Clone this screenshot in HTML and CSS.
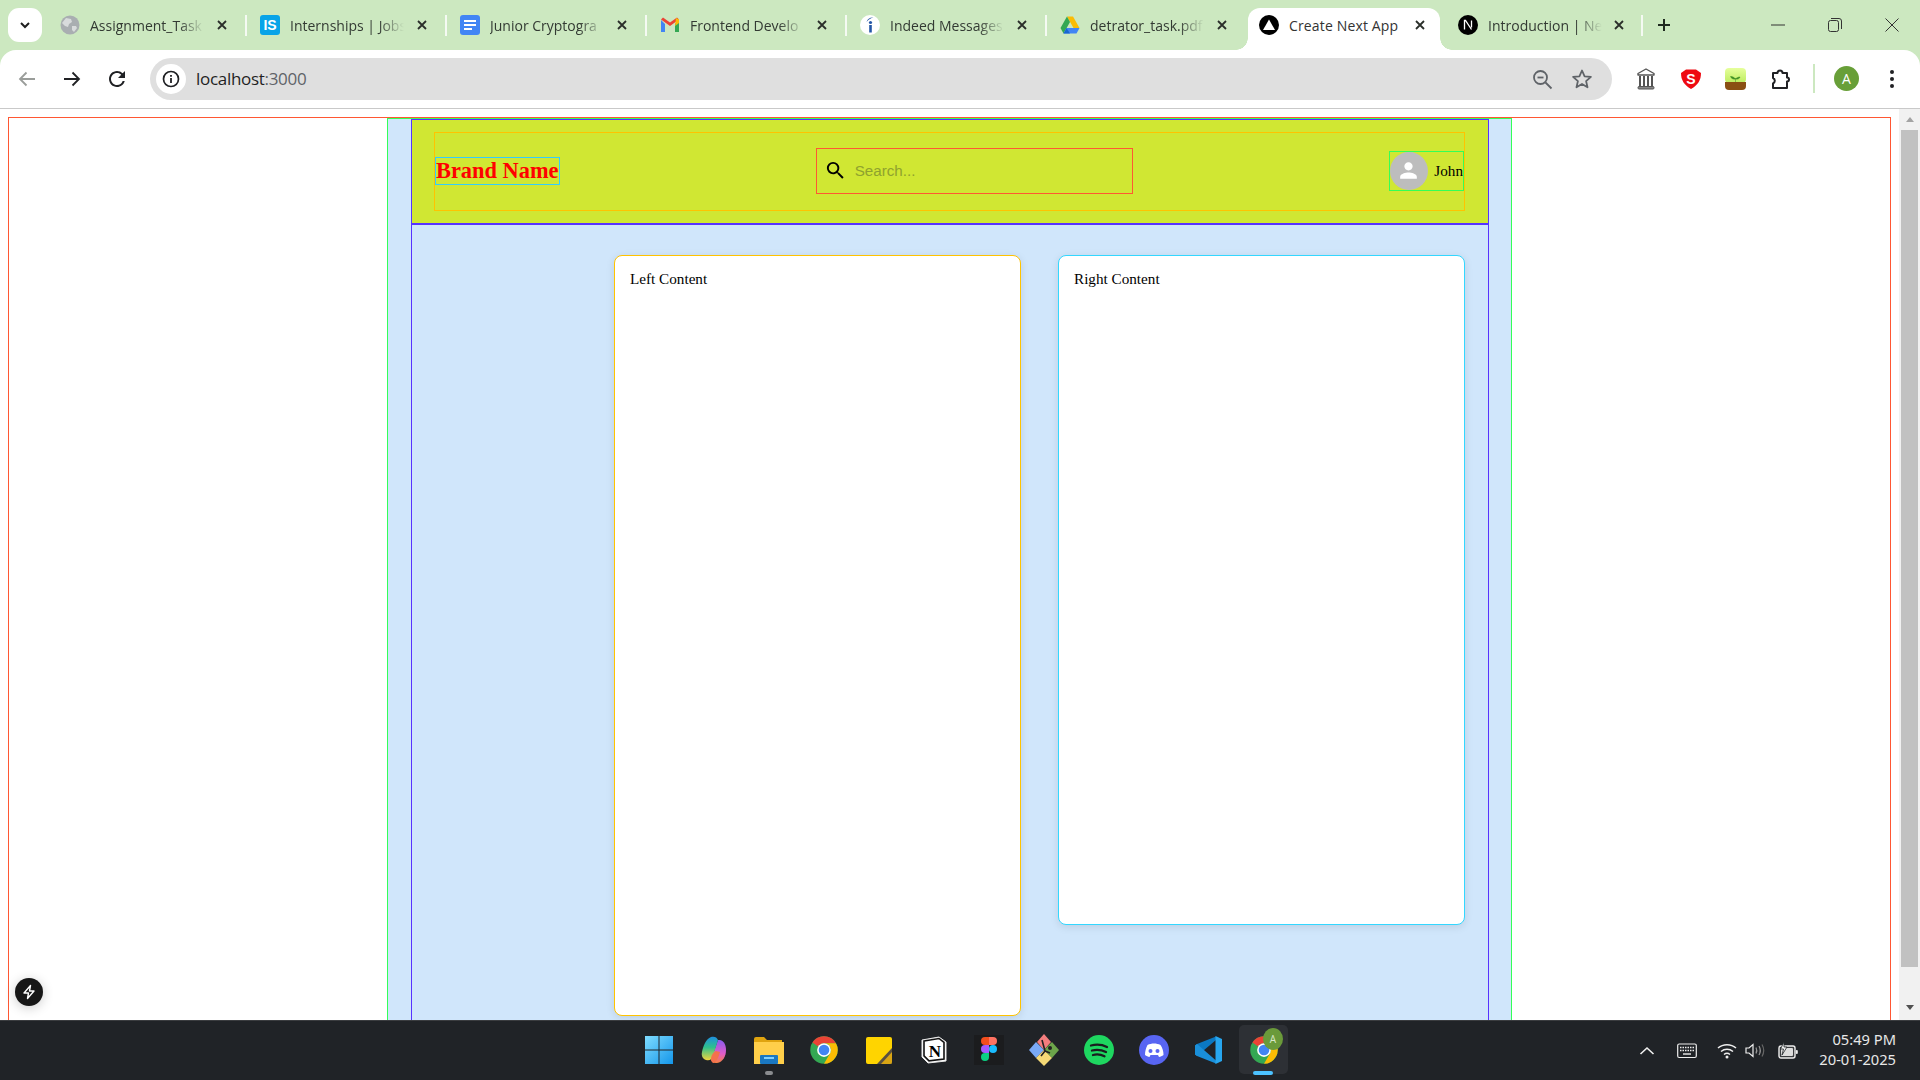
FILE: index.html
```html
<!DOCTYPE html>
<html lang="en">
<head>
<meta charset="utf-8">
<title>Create Next App</title>
<link rel="stylesheet" href="styles.css">
</head>
<body>
<svg class="defs" width="0" height="0" aria-hidden="true">
  <defs>
    <symbol id="x" viewBox="0 0 12 12"><path d="M2 2l8 8M10 2l-8 8" fill="none" stroke="#2a2f2a" stroke-width="1.8"/></symbol>
    <symbol id="chrome" viewBox="0 0 48 48">
      <circle cx="24" cy="24" r="22" fill="#34a853"/>
      <path d="M24 2A22 22 0 0 1 43.05 13H24A11 11 0 0 0 14.5 18.5L5.5 12A22 22 0 0 1 24 2Z" fill="#ea4335"/>
      <path d="M43.05 13A22 22 0 0 1 24 46L33.5 29.5A11 11 0 0 0 24 13Z" fill="#fbbc04"/>
      <circle cx="24" cy="24" r="11" fill="#fff"/>
      <circle cx="24" cy="24" r="8.5" fill="#4285f4"/>
    </symbol>
  </defs>
</svg>

<header class="tabstrip">
  <button class="tab-search"><svg width="14" height="14" viewBox="0 0 14 14"><path d="M3 5l4 4 4-4" fill="none" stroke="#1f1f1f" stroke-width="2"/></svg></button>
  <div class="tab">
    <svg class="fav" viewBox="0 0 20 20"><circle cx="10" cy="10" r="9.5" fill="#a9aeb1"/><path d="M6 3l5 1 1 3-3 2-1 3-3-1-3-3zM12 11l4 0 1 2-3 4-2-2z" fill="#d8dbdc"/></svg>
    <span class="tab-title">Assignment_Task</span>
    <svg class="tab-x"><use href="#x"/></svg>
  </div>
  <div class="tab">
    <svg class="fav" viewBox="0 0 20 20"><rect width="20" height="20" rx="3" fill="#08a4e8"/><text x="10" y="15" text-anchor="middle" class="fav-is">IS</text></svg>
    <span class="tab-title">Internships | Jobs</span>
    <svg class="tab-x"><use href="#x"/></svg>
  </div>
  <div class="tab">
    <svg class="fav" viewBox="0 0 20 20"><rect width="20" height="20" rx="3" fill="#4285f4"/><path d="M4 5h12v2H4zM4 9h12v2H4zM4 13h8v2H4z" fill="#fff"/></svg>
    <span class="tab-title">Junior Cryptogra</span>
    <svg class="tab-x"><use href="#x"/></svg>
  </div>
  <div class="tab">
    <svg class="fav" viewBox="0 0 20 20"><path d="M1 5v12h4V9z" fill="#4285f4"/><path d="M19 5v12h-4V9z" fill="#34a853"/><path d="M1 4.500L10 11l9-6.500-2-2-7 5-7-5z" fill="#ea4335"/><path d="M16 3l3 1.500V8l-4 3z" fill="#fbbc04"/></svg>
    <span class="tab-title">Frontend Develo</span>
    <svg class="tab-x"><use href="#x"/></svg>
  </div>
  <div class="tab">
    <svg class="fav" viewBox="0 0 20 20"><circle cx="10" cy="10" r="10" fill="#fff"/><path d="M6.500 7C7.500 3.500 10.500 2 13.500 2.500 11 3 8.500 4.500 6.500 7z" fill="#2557a7"/><circle cx="10.500" cy="7.500" r="1.600" fill="#2557a7"/><rect x="9.200" y="10" width="2.600" height="7.500" fill="#2557a7"/></svg>
    <span class="tab-title">Indeed Messages</span>
    <svg class="tab-x"><use href="#x"/></svg>
  </div>
  <div class="tab">
    <svg class="fav" viewBox="0 0 20 20"><path d="M7 1.500h6l6.500 11.500h-6z" fill="#fbbc04"/><path d="M7 1.500L.5 13l3 5.500L10 7z" fill="#34a853"/><path d="M3.500 18.500h13l3-5.500H6.500z" fill="#4285f4"/><path d="M3.500 18.500h6.500l-3.500-5.500z" fill="#1967d2"/></svg>
    <span class="tab-title">detrator_task.pdf</span>
    <svg class="tab-x"><use href="#x"/></svg>
  </div>
  <div class="tab tab-active">
    <svg class="fav" viewBox="0 0 20 20"><circle cx="10" cy="10" r="10" fill="#000"/><path d="M10 4.500l6 10.500H4z" fill="#fff"/></svg>
    <span class="tab-title tab-title-full">Create Next App</span>
    <svg class="tab-x"><use href="#x"/></svg>
  </div>
  <div class="tab tab-last">
    <svg class="fav" viewBox="0 0 20 20"><circle cx="10" cy="10" r="10" fill="#000"/><path d="M6.500 14.500v-9h1l6 9M13.500 5.500v7" fill="none" stroke="#fff" stroke-width="1.300"/></svg>
    <span class="tab-title">Introduction | Ne</span>
    <svg class="tab-x"><use href="#x"/></svg>
  </div>
  <svg class="new-tab" viewBox="0 0 16 16"><path d="M8 2v12M2 8h12" fill="none" stroke="#1f2a1f" stroke-width="2"/></svg>
  <div class="win-controls">
    <span class="win-btn"><svg width="14" height="14" viewBox="0 0 14 14"><path d="M0 7h14" stroke="#333" stroke-width="1"/></svg></span>
    <span class="win-btn"><svg width="14" height="14" viewBox="0 0 14 14"><rect x=".5" y="2.500" width="10" height="11" rx="2" fill="none" stroke="#333"/><path d="M3 .5h8a2.500 2.500 0 0 1 2.500 2.500v8" fill="none" stroke="#333"/></svg></span>
    <span class="win-btn"><svg width="14" height="14" viewBox="0 0 14 14"><path d="M.5.5l13 13M13.500.5l-13 13" stroke="#333" stroke-width="1"/></svg></span>
  </div>
</header>

<nav class="toolbar">
  <span class="tool-btn"><svg width="20" height="20" viewBox="0 0 20 20"><path d="M18 10H3M9.500 3.500L3 10l6.500 6.500" fill="none" stroke="#9a9d9a" stroke-width="1.800"/></svg></span>
  <span class="tool-btn"><svg width="20" height="20" viewBox="0 0 20 20"><path d="M2 10h15M10.500 3.500L17 10l-6.500 6.500" fill="none" stroke="#202124" stroke-width="1.800"/></svg></span>
  <span class="tool-btn"><svg width="24" height="24" viewBox="0 0 24 24"><path fill="#202124" d="M17.650 6.350A7.958 7.958 0 0 0 12 4c-4.420 0-7.990 3.580-7.990 8s3.570 8 7.990 8c3.730 0 6.840-2.550 7.730-6h-2.080A5.990 5.990 0 0 1 12 18c-3.310 0-6-2.690-6-6s2.690-6 6-6c1.660 0 3.140.69 4.220 1.780L13 11h7V4l-2.350 2.350z"/></svg></span>
  <div class="omnibox">
    <span class="site-chip"><svg width="20" height="20" viewBox="0 0 20 20"><circle cx="10" cy="10" r="7.500" fill="none" stroke="#202124" stroke-width="1.700"/><path d="M10 9v5M10 6v1.800" stroke="#202124" stroke-width="1.800"/></svg></span>
    <span class="url">localhost<span class="url-port">:3000</span></span>
    <span class="omni-btn"><svg width="22" height="22" viewBox="0 0 22 22"><circle cx="9.500" cy="9.500" r="6.500" fill="none" stroke="#5f6368" stroke-width="1.800"/><path d="M14.500 14.500l6 6" stroke="#5f6368" stroke-width="1.800"/><path d="M6.500 9.500h6" stroke="#5f6368" stroke-width="1.800"/></svg></span>
    <span class="omni-btn"><svg width="22" height="22" viewBox="0 0 22 22"><path d="M11 2.500l2.600 5.800 6.300.6-4.800 4.200 1.400 6.200L11 16l-5.500 3.300 1.400-6.200L2.100 8.900l6.300-.6z" fill="none" stroke="#5f6368" stroke-width="1.800" stroke-linejoin="round"/></svg></span>
  </div>
  <span class="tool-btn tool-first"><svg width="20" height="24" viewBox="0 0 20 24"><path d="M10 2L2 6.500v1.500h16V6.500z" fill="#fff" stroke="#555" stroke-width="1.400" stroke-linejoin="round"/><path d="M4 9v10M8 9v10M12 9v10M16 9v10" stroke="#555" stroke-width="2"/><rect x="2" y="19.500" width="16" height="2.500" rx="1" fill="#888" stroke="#555"/></svg></span>
  <span class="tool-btn"><svg width="22" height="22" viewBox="0 0 22 22"><path d="M6 1.500h10L21 5c0 7-3 12-10 16C4 17 1 12 1 5z" fill="#ee0a12"/><text x="11" y="15.500" text-anchor="middle" class="shield-s">S</text></svg></span>
  <span class="tool-btn"><svg width="21" height="22" viewBox="0 0 21 22"><defs><linearGradient id="forest" x1="0" y1="0" x2="0" y2="1"><stop offset="0" stop-color="#e6ff9c"/><stop offset="1" stop-color="#bdec5f"/></linearGradient></defs><rect width="21" height="15" rx="4" fill="url(#forest)"/><path d="M0 14h21v4a4 4 0 0 1-4 4H4a4 4 0 0 1-4-4z" fill="#8a4f13"/><path d="M10.500 14V10M10.500 11C9 9 7 8.500 5.500 8.500 6 10.500 8.500 11.500 10.500 11zM10.500 11c1.500-1.500 3-2 4.500-2-.5 1.800-2.500 2.500-4.500 2z" fill="#3f8f25" stroke="#3f8f25" stroke-width=".5"/></svg></span>
  <span class="tool-btn"><svg width="22" height="22" viewBox="0 0 22 22"><path d="M3 5h4.500a2.500 2.500 0 0 1 5 0H17v4.500a2 2 0 0 1 0 4V20H3v-4.500a3 3 0 0 0 0-5.500z" fill="none" stroke="#202124" stroke-width="2" stroke-linejoin="round"/></svg></span>
  <span class="tool-sep"></span>
  <span class="tool-btn"><span class="profile">A</span></span>
  <span class="tool-btn"><svg width="6" height="20" viewBox="0 0 6 20"><circle cx="3" cy="3" r="2" fill="#202124"/><circle cx="3" cy="10" r="2" fill="#202124"/><circle cx="3" cy="17" r="2" fill="#202124"/></svg></span>
</nav>

<div class="viewport">
  <div class="page">
    <div class="shell">
      <div class="frame">
        <div class="column">
          <div class="header-band">
            <div class="header-row">
              <div class="brand">Brand Name</div>
              <label class="search">
                <svg class="search-icon" viewBox="0 0 24 24"><path fill="#000" d="M15.500 14h-.79l-.28-.27A6.471 6.471 0 0 0 16 9.500 6.500 6.500 0 1 0 9.500 16c1.610 0 3.090-.59 4.230-1.570l.27.28v.79l5 4.990L20.490 19l-4.990-5zm-6 0C7.010 14 5 11.990 5 9.500S7.010 5 9.500 5 14 7.010 14 9.500 11.990 14 9.500 14z"/></svg>
                <input class="search-input" placeholder="Search...">
              </label>
              <div class="user">
                <span class="user-avatar"><svg width="25" height="25" viewBox="0 0 24 24"><path fill="#fff" d="M12 12c2.210 0 4-1.790 4-4s-1.790-4-4-4-4 1.790-4 4 1.790 4 4 4zm0 2c-2.670 0-8 1.340-8 4v2h16v-2c0-2.660-5.330-4-8-4z"/></svg></span>
                <span class="user-name">John</span>
              </div>
            </div>
          </div>
          <main class="content">
            <section class="card card-left">Left Content</section>
            <section class="card card-right">Right Content</section>
          </main>
        </div>
      </div>
    </div>
  </div>
  <div class="scrollbar">
    <span class="arrow-up"></span>
    <span class="thumb"></span>
    <span class="arrow-down"></span>
  </div>
  <span class="dev-badge"><svg width="16" height="16" viewBox="0 0 16 16"><path d="M9.500 1.500L3 9h4.500l-1 5.500L13 7H8.500z" fill="none" stroke="#fff" stroke-width="1.400" stroke-linejoin="round"/></svg></span>
</div>

<footer class="taskbar">
  <div></div>
  <div class="apps">
    <span class="app"><svg width="30" height="30" viewBox="0 0 30 30"><defs><linearGradient id="win" x1="0" y1="0" x2="1" y2="1"><stop offset="0" stop-color="#7fdcff"/><stop offset="1" stop-color="#1496ea"/></linearGradient></defs><path d="M1 1h13.500v13.500H1zM15.500 1H29v13.500H15.500zM1 15.500h13.500V29H1zM15.500 15.500H29V29H15.500z" fill="url(#win)"/></svg></span>
    <span class="app"><svg width="28" height="30" viewBox="0 0 28 30"><defs><linearGradient id="cop-a" x1="0" y1="0" x2="0" y2="1"><stop offset="0" stop-color="#1f8fe0"/><stop offset=".45" stop-color="#2fc08c"/><stop offset="1" stop-color="#f2d53c"/></linearGradient><linearGradient id="cop-b" x1="0" y1="0" x2="0" y2="1"><stop offset="0" stop-color="#8a5cf0"/><stop offset=".6" stop-color="#e05cc8"/><stop offset="1" stop-color="#f6803c"/></linearGradient></defs><path d="M20 5c4 1 6 5 6 10 0 6-3 12-9 13-3 .5-5-1-6-3l7-20z" fill="url(#cop-b)"/><path d="M11 2c3-1 6 0 7 3l-5 16c-1 4-4 5-7 4-3-1-5-4-4-8 1-6 4-13 9-15z" fill="url(#cop-a)"/><path d="M11 24c0-3 2-7 5-8l4 1c-1 4-3 9-6 11-2 0-3-2-3-4z" fill="#f4724c"/></svg></span>
    <span class="app app-open"><svg width="30" height="28" viewBox="0 0 30 28"><path d="M0 3a2 2 0 0 1 2-2h8l3 3h15v6H0z" fill="#e0a40f"/><path d="M0 6h30v22H0z" fill="#ffcf4a"/><rect x="6" y="19" width="18" height="9" rx="1" fill="#1a78c2"/><rect x="10" y="21" width="10" height="2" fill="#7fd0ff"/></svg></span>
    <span class="app"><svg width="30" height="30"><use href="#chrome"/></svg></span>
    <span class="app"><svg width="26" height="27" viewBox="0 0 26 27"><rect width="26" height="27" rx="2" fill="#ffd400"/><path d="M26 11v14a2 2 0 0 1-2 2H11z" fill="#5a5040"/><path d="M26 15v10a2 2 0 0 1-2 2h-9z" fill="#d9a514"/></svg></span>
    <span class="app"><svg width="26" height="28" viewBox="0 0 26 28"><path d="M1 4l17-3 7 5v19l-18 2-6-6z" fill="#fff" stroke="#e8e8e8" stroke-width="1"/><path d="M3 5l15-2.500 5 4v16.500l-15 1.800-5-5z" fill="#fff" stroke="#111" stroke-width="1.600"/><text x="14" y="20.500" text-anchor="middle" class="notion-n">N</text></svg></span>
    <span class="app"><svg width="30" height="30" viewBox="0 0 30 30"><rect width="30" height="30" fill="#1b1c1e"/><path d="M15 2h-4a4 4 0 0 0 0 8h4z" fill="#f24e1e"/><path d="M15 2h4a4 4 0 0 1 0 8h-4z" fill="#ff7262"/><path d="M15 10h-4a4 4 0 0 0 0 8h4z" fill="#a259ff"/><circle cx="19" cy="14" r="4" fill="#1abcfe"/><path d="M11 18h4v4a4 4 0 1 1-4-4z" fill="#0acf83"/></svg></span>
    <span class="app"><svg width="30" height="32" viewBox="0 0 30 32"><path d="M15 0l7 8-7 8-7-8z" fill="#f37d7d"/><path d="M7 8l8 8-8 8-7-8z" fill="#7aa9f5"/><path d="M23 8l7 8-7 8-8-8z" fill="#6da54a"/><path d="M15 16l8 8-8 8-8-8z" fill="#f5d976"/><path d="M13 6l3 11M16 17l-4 5M16 17l5 2" stroke="#222" stroke-width="1.600" fill="none"/><circle cx="21" cy="14" r="2" fill="#222"/></svg></span>
    <span class="app"><svg width="30" height="30" viewBox="0 0 30 30"><circle cx="15" cy="15" r="15" fill="#1ed760"/><path d="M7 10.500c6-1.500 11-1 16 1.500M8 15.500c5-1.200 9.500-.7 14 1.500M9 20c4-1 8-.5 11.500 1.300" fill="none" stroke="#1a1d1f" stroke-width="2.300" stroke-linecap="round"/></svg></span>
    <span class="app"><svg width="30" height="30" viewBox="0 0 30 30"><circle cx="15" cy="15" r="15" fill="#5865f2"/><path d="M8.500 10c4-2 9-2 13 0 2 3 3 6 3 10-1.500 1-3 1.800-4.500 2l-1-2h-7.500l-1 2c-1.500-.2-3-1-4.500-2 0-4 1-7 2.500-10z" fill="#fff"/><circle cx="11.500" cy="16" r="2" fill="#5865f2"/><circle cx="18.500" cy="16" r="2" fill="#5865f2"/></svg></span>
    <span class="app"><svg width="30" height="30" viewBox="0 0 30 30"><path d="M3 9l-2 1.500v9L3 21l19-16V1.500z" fill="#0b78c2"/><path d="M3 21l-2-1.500v-9L3 9l19 16.500v3z" fill="#1a8fd9"/><path d="M21.500 1L28 4v22l-6.500 3z" fill="#27a6ef"/></svg></span>
    <span class="app app-active">
      <svg width="30" height="30"><use href="#chrome"/></svg>
      <span class="app-badge">A</span>
    </span>
  </div>
  <div class="tray">
    <svg class="tray-chevron" viewBox="0 0 16 10"><path d="M1.500 8L8 2l6.500 6" fill="none" stroke="#f0f0f0" stroke-width="1.600"/></svg>
    <svg class="tray-keys" viewBox="0 0 20 16"><rect x=".7" y="1" width="18.600" height="13.500" rx="1.500" fill="none" stroke="#eee" stroke-width="1.200"/><path d="M3 4.500h14M3 7.500h14" stroke="#eee" stroke-width="1.400" stroke-dasharray="1.500 1"/><path d="M6 11h8" stroke="#eee" stroke-width="1.400"/></svg>
    <div class="tray-group">
      <svg class="tray-icon" viewBox="0 0 20 16"><path d="M1 5.500c5-4.500 13-4.500 18 0M4 9c3.500-3 8.500-3 12 0M7 12c1.800-1.400 4.200-1.400 6 0" fill="none" stroke="#eee" stroke-width="1.500"/><circle cx="10" cy="14.500" r="1.500" fill="#eee"/></svg>
      <svg class="tray-icon tray-speaker" viewBox="0 0 20 16"><path d="M1 5.500h3L8 2v12L4 10.500H1z" fill="none" stroke="#eee" stroke-width="1.200"/><path d="M11 5c1 2 1 4 0 6M14 3.500c1.700 3 1.700 6 0 9" fill="none" stroke="#999" stroke-width="1.200"/><path d="M17 2c2.300 4 2.300 8 0 12" fill="none" stroke="#666" stroke-width="1.200"/></svg>
      <svg class="tray-icon" viewBox="0 0 20 17"><rect x="1" y="4" width="16" height="12" rx="2" fill="#3a3c3f" stroke="#eee" stroke-width="1.400"/><rect x="3" y="6" width="12" height="8" rx="1" fill="#ddd"/><rect x="17.800" y="8" width="2" height="4" rx="1" fill="#eee"/><path d="M6 0L2.500 7h3l-1.500 6 5-8H6z" fill="#eee" stroke="#202327" stroke-width=".8"/></svg>
    </div>
    <div class="clock">
      <div>05:49 PM</div>
      <div>20-01-2025</div>
    </div>
  </div>
</footer>
</body>
</html>
```

FILE: styles.css
```css
* { box-sizing: border-box; }

html, body { margin: 0; height: 100%; }

body {
  display: flex;
  flex-direction: column;
  height: 100vh;
  overflow: hidden;
  background: #cce8c0;
  font-family: "Open Sans", "Noto Sans", sans-serif;
}

.defs { position: absolute; }

/* Browser tab strip */
.tabstrip {
  display: flex;
  align-items: flex-start;
  flex: 0 0 50px;
  padding: 8px 0 0 8px;
  background: #cce8c0;
}

.tab-search {
  display: flex;
  align-items: center;
  justify-content: center;
  flex: 0 0 34px;
  height: 34px;
  margin-right: 6px;
  padding: 0;
  border: 0;
  border-radius: 11px;
  background: #fff;
}

.tab {
  display: flex;
  align-items: center;
  flex: 0 0 200px;
  height: 42px;
  padding: 0 0 8px 12px;
}

.tab::after {
  content: "";
  flex: 0 0 2px;
  height: 21px;
  margin-left: auto;
  margin-right: 1px;
  background: #f5faf3;
}

.tab:nth-of-type(6)::after,
.tab-active::after { display: none; }

.fav { flex: 0 0 20px; width: 20px; height: 20px; }

.fav-is {
  font: 700 14px "Liberation Sans", sans-serif;
  fill: #fff;
}

.tab-title {
  flex: 0 0 114px;
  width: 114px;
  margin-left: 10px;
  overflow: hidden;
  white-space: nowrap;
  font-size: 14px;
  color: #333a33;
  -webkit-mask-image: linear-gradient(to right, #000 78%, transparent 100%);
  mask-image: linear-gradient(to right, #000 78%, transparent 100%);
}

.tab-title-full {
  -webkit-mask-image: none;
  mask-image: none;
  letter-spacing: .15px;
  color: #333;
}

.tab-x { flex: 0 0 12px; width: 12px; height: 12px; margin-left: 12px; }

.tab-active {
  position: relative;
  flex: 0 0 192px;
  height: 42px;
  margin-right: 6px;
  padding-left: 11px;
  border-radius: 12px 12px 0 0;
  background: #fff;
}

.tab-active::before {
  content: "";
  position: absolute;
  left: -12px;
  bottom: 0;
  width: 12px;
  height: 12px;
  background: radial-gradient(circle at 0 0, transparent 11.500px, #fff 12px);
}

.tab-active .tab-x { margin-left: 11px; }

.tab-last { flex: 0 0 198px; position: relative; }

.tab-last::before {
  content: "";
  position: absolute;
  left: -6px;
  bottom: 0;
  width: 12px;
  height: 12px;
  background: radial-gradient(circle at 100% 0, transparent 11.500px, #fff 12px);
}

.tab-last .tab-x { margin-left: 11px; }

.new-tab { flex: 0 0 16px; width: 16px; height: 16px; margin: 9px 0 0 12px; }

.win-controls {
  display: flex;
  margin-left: auto;
  margin-top: -8px;
}

.win-btn {
  display: flex;
  align-items: center;
  justify-content: center;
  width: 57px;
  height: 50px;
}

/* Browser toolbar */
.toolbar {
  display: flex;
  align-items: center;
  flex: 0 0 59px;
  padding: 0 6px 1px 4px;
  border-bottom: 1px solid #c9c9c9;
  border-radius: 16px 16px 0 0;
  background: #fff;
}

.tool-btn {
  display: flex;
  align-items: center;
  justify-content: center;
  flex: 0 0 45px;
  height: 40px;
}

.tool-first { margin-left: 11px; }

.tool-sep {
  flex: 0 0 2px;
  height: 29px;
  margin: 0 9px 0 10px;
  background: #cce8c0;
}

.profile {
  display: flex;
  align-items: center;
  justify-content: center;
  width: 25px;
  height: 25px;
  border-radius: 50%;
  background: #689f38;
  color: #fff;
  font-size: 14px;
}

.shield-s {
  font: 700 14px "Liberation Sans", sans-serif;
  fill: #fff;
}

.omnibox {
  display: flex;
  align-items: center;
  flex: 1;
  height: 42px;
  margin-left: 11px;
  padding: 0 10px 0 5px;
  border-radius: 21px;
  background: #dfdfdf;
}

.site-chip {
  display: flex;
  align-items: center;
  justify-content: center;
  width: 30px;
  height: 30px;
  margin-left: 1px;
  border-radius: 50%;
  background: #fff;
}

.url {
  flex: 1;
  margin-left: 10px;
  font-size: 17px;
  letter-spacing: -.3px;
  color: #1f1f1f;
}

.url-port { color: #5f6368; }

.omni-btn {
  display: flex;
  align-items: center;
  justify-content: center;
  width: 40px;
  height: 36px;
}

/* Page area */
.viewport {
  position: relative;
  display: flex;
  flex: 1;
  min-height: 0;
  background: #fff;
}

.page {
  flex: 1;
  min-width: 0;
  padding: 8px;
  overflow: hidden;
  font-family: "Liberation Serif", "Times New Roman", serif;
  font-size: 15.200px;
  color: #000;
}

.shell {
  border: 1px solid #ff5733;
  background: #fff;
}

.frame {
  width: 1125px;
  margin: 0 auto;
  padding: 0 22px 0 23px;
  border: 1px solid #33ff57;
  border-bottom: 0;
  background: #d0e6fb;
}

.column {
  border: 1px solid #5733ff;
  border-bottom: 0;
}

.header-band {
  padding: 12px 23px 12px 22px;
  border-bottom: 2px solid #5733ff;
  background: #d0e733;
}

.header-row {
  display: flex;
  align-items: center;
  justify-content: space-between;
  height: 79px;
  padding-bottom: 2px;
  border: 1px solid #ffc300;
}

.brand {
  border: 1px solid #33ccff;
  font-size: 22.400px;
  font-weight: 700;
  line-height: 26px;
  color: #f00;
}

.search {
  display: flex;
  align-items: center;
  flex: 0 0 317px;
  height: 46px;
  padding-left: 7px;
  border: 1px solid #ff5733;
}

.search-icon { flex: 0 0 23px; width: 23px; height: 23px; }

.search-input {
  flex: 1;
  min-width: 0;
  height: 24px;
  margin-left: 8px;
  padding: 0;
  border: 0;
  outline: 0;
  background: transparent;
  font-family: "Liberation Sans", Arial, sans-serif;
  font-size: 15.200px;
}

.search-input::placeholder { color: #8fa22e; opacity: 1; }

.user {
  display: flex;
  align-items: center;
  height: 40px;
  border: 1px solid #33ff57;
}

.user-avatar {
  display: flex;
  align-items: center;
  justify-content: center;
  width: 38px;
  height: 38px;
  border-radius: 50%;
  background: #bdbdbd;
}

.user-name { margin-left: 6.500px; }

.content {
  display: flex;
  align-items: flex-start;
  justify-content: flex-end;
  gap: 37px;
  padding: 30px 23px 40px;
}

.card {
  flex: 0 0 407px;
  padding: 14px 15px;
  border-radius: 8px;
  background: #fff;
  box-shadow: 0 2px 8px rgba(0, 0, 0, .1);
}

.card-left { height: 761px; border: 1px solid #ffc300; }

.card-right { height: 670px; border: 1px solid #33d7ff; }

/* Fake scrollbar */
.scrollbar {
  display: flex;
  flex-direction: column;
  align-items: center;
  flex: 0 0 21px;
  background: #f1f1f1;
}

.arrow-up {
  width: 0;
  height: 0;
  margin-top: 8px;
  border: 4.500px solid transparent;
  border-top: 0;
  border-bottom: 5px solid #a3a3a3;
}

.thumb {
  width: 17px;
  height: 837px;
  margin-top: 8px;
  background: #c1c1c1;
}

.arrow-down {
  width: 0;
  height: 0;
  margin-top: 38px;
  border: 4.500px solid transparent;
  border-bottom: 0;
  border-top: 5px solid #505050;
}

.dev-badge {
  position: absolute;
  left: 15px;
  bottom: 14px;
  display: flex;
  align-items: center;
  justify-content: center;
  width: 28px;
  height: 28px;
  border-radius: 50%;
  background: #171717;
  box-shadow: 0 2px 12px rgba(0, 0, 0, .2);
}

/* Windows taskbar */
.taskbar {
  display: grid;
  grid-template-columns: 1fr auto 1fr;
  flex: 0 0 60px;
  border-top: 1px solid #3a3c3f;
  background: #202327;
}

.apps { display: flex; padding-left: 2px; }

.app {
  position: relative;
  display: flex;
  align-items: center;
  justify-content: center;
  width: 55px;
  height: 58px;
}

.app-open::after {
  content: "";
  position: absolute;
  left: 23.500px;
  bottom: 4px;
  width: 8px;
  height: 4px;
  border-radius: 2px;
  background: #8a8c8f;
}

.app-active::before {
  content: "";
  position: absolute;
  left: 3px;
  top: 4px;
  width: 49px;
  height: 49px;
  border-radius: 5px;
  background: #2d3035;
}

.app-active::after {
  content: "";
  position: absolute;
  left: 17px;
  bottom: 4px;
  width: 20px;
  height: 4px;
  border-radius: 2px;
  background: #4cc2ff;
}

.app-active svg { position: relative; }

.app-badge {
  position: absolute;
  left: 27px;
  top: 7px;
  display: flex;
  align-items: center;
  justify-content: center;
  width: 20px;
  height: 22px;
  border-radius: 50%;
  background: #6a9a3a;
  color: #d8e8c8;
  font-size: 10px;
}

.notion-n {
  font: 700 17px "Liberation Serif", serif;
  fill: #000;
}

.tray {
  display: flex;
  align-items: center;
  justify-content: flex-end;
  padding-right: 24px;
}

.tray-chevron { width: 16px; height: 10px; margin-right: 22px; }

.tray-keys { width: 20px; height: 16px; margin-right: 20px; }

.tray-group { display: flex; align-items: center; gap: 9px; margin-right: 21px; }

.tray-icon { width: 20px; height: 17px; }

.tray-speaker { margin: 0 4px 0 -1px; }

.clock {
  display: flex;
  flex-direction: column;
  align-items: flex-end;
  gap: 1px;
  padding-bottom: 2px;
  font-family: "Noto Sans", sans-serif;
  font-size: 14.700px;
  line-height: 19px;
  color: #e8e8e8;
}
```
